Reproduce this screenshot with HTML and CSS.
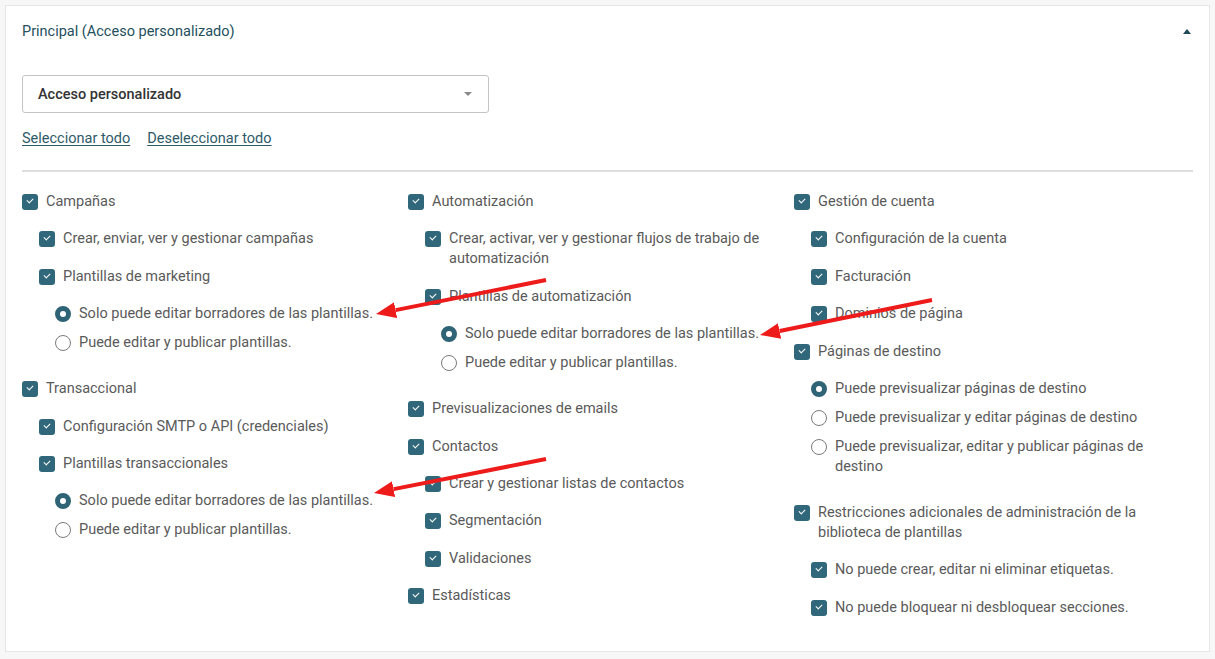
FILE: index.html
```html
<!DOCTYPE html>
<html lang="es">
<head>
  <meta charset="UTF-8">
  <meta name="viewport" content="width=device-width, initial-scale=1.0">
  <title>Permisos de usuario</title>
  <link rel="stylesheet" href="styles.css">
</head>
<body>
  <div class="card">
    <div class="header">
      <span class="title">Principal (Acceso personalizado)</span>
      <span class="caret-up"></span>
    </div>

    <div class="select">
      <span>Acceso personalizado</span>
      <span class="caret-down"></span>
    </div>

    <div class="links">
      <a href="#">Seleccionar todo</a>
      <a href="#">Deseleccionar todo</a>
    </div>

    <hr class="divider">

    <div class="columns">
      <div class="col">
        <div class="opt"><span class="box"></span><span>Campañas</span></div>
        <div class="opt sub"><span class="box"></span><span>Crear, enviar, ver y gestionar campañas</span></div>
        <div class="opt sub"><span class="box"></span><span>Plantillas de marketing</span></div>
        <div class="radios">
          <div class="radio"><span class="dot on"></span><span>Solo puede editar borradores de las plantillas.</span></div>
          <div class="radio"><span class="dot"></span><span>Puede editar y publicar plantillas.</span></div>
        </div>
        <div class="opt"><span class="box"></span><span>Transaccional</span></div>
        <div class="opt sub"><span class="box"></span><span>Configuración SMTP o API (credenciales)</span></div>
        <div class="opt sub"><span class="box"></span><span>Plantillas transaccionales</span></div>
        <div class="radios">
          <div class="radio"><span class="dot on"></span><span>Solo puede editar borradores de las plantillas.</span></div>
          <div class="radio"><span class="dot"></span><span>Puede editar y publicar plantillas.</span></div>
        </div>
      </div>

      <div class="col">
        <div class="opt"><span class="box"></span><span>Automatización</span></div>
        <div class="opt sub"><span class="box"></span><span>Crear, activar, ver y gestionar flujos de trabajo de automatización</span></div>
        <div class="opt sub"><span class="box"></span><span>Plantillas de automatización</span></div>
        <div class="radios">
          <div class="radio"><span class="dot on"></span><span>Solo puede editar borradores de las plantillas.</span></div>
          <div class="radio"><span class="dot"></span><span>Puede editar y publicar plantillas.</span></div>
        </div>
        <div class="opt"><span class="box"></span><span>Previsualizaciones de emails</span></div>
        <div class="opt"><span class="box"></span><span>Contactos</span></div>
        <div class="opt sub"><span class="box"></span><span>Crear y gestionar listas de contactos</span></div>
        <div class="opt sub"><span class="box"></span><span>Segmentación</span></div>
        <div class="opt sub"><span class="box"></span><span>Validaciones</span></div>
        <div class="opt"><span class="box"></span><span>Estadísticas</span></div>
      </div>

      <div class="col">
        <div class="opt"><span class="box"></span><span>Gestión de cuenta</span></div>
        <div class="opt sub"><span class="box"></span><span>Configuración de la cuenta</span></div>
        <div class="opt sub"><span class="box"></span><span>Facturación</span></div>
        <div class="opt sub"><span class="box"></span><span>Dominios de página</span></div>
        <div class="opt"><span class="box"></span><span>Páginas de destino</span></div>
        <div class="radios shallow">
          <div class="radio"><span class="dot on"></span><span>Puede previsualizar páginas de destino</span></div>
          <div class="radio"><span class="dot"></span><span>Puede previsualizar y editar páginas de destino</span></div>
          <div class="radio"><span class="dot"></span><span>Puede previsualizar, editar y publicar páginas de destino</span></div>
        </div>
        <div class="opt"><span class="box"></span><span>Restricciones adicionales de administración de la biblioteca de plantillas</span></div>
        <div class="opt sub"><span class="box"></span><span>No puede crear, editar ni eliminar etiquetas.</span></div>
        <div class="opt sub"><span class="box"></span><span>No puede bloquear ni desbloquear secciones.</span></div>
      </div>
    </div>
  </div>

  <!-- red annotation arrows drawn over the screenshot -->
  <svg class="arrows" width="1215" height="659" viewBox="0 0 1215 659">
    <defs>
      <marker id="head" markerWidth="20" markerHeight="16" refX="0" refY="8" orient="auto" markerUnits="userSpaceOnUse">
        <path d="M0,0 L20,8 L0,16 z" fill="#ee1b1b"/>
      </marker>
    </defs>
    <line x1="546" y1="280" x2="395.6" y2="310.1" marker-end="url(#head)"/>
    <line x1="932" y1="300" x2="779.6" y2="331" marker-end="url(#head)"/>
    <line x1="546" y1="459" x2="393.6" y2="489.1" marker-end="url(#head)"/>
  </svg>
</body>
</html>
```

FILE: styles.css
```css
body {
  font-family: Roboto, "Liberation Sans", Arial, sans-serif;
  font-size: 14.5px;
  background: #f7f7f7;
  margin: 0;
  padding: 5px;
  color: #5a5a5a;
}
.card {
  box-sizing: border-box;
  height: 647px;
  width: 1205px;
  background: white;
  border: 1px solid #e6e6e6;
  padding: 0 16px;
}
.header {
  height: 51px;
  display: flex;
  align-items: center;
  justify-content: space-between;
}
.title {
  color: #24505e;
  line-height: 20px;
}
.caret-up {
  width: 0;
  height: 0;
  margin-right: 2px;
  border-left: 4px solid transparent;
  border-right: 4px solid transparent;
  border-bottom: 5px solid #1f4a58;
}
.select {
  box-sizing: border-box;
  width: 467px;
  height: 38px;
  margin-top: 18px;
  border: 1px solid #c4c4c4;
  border-radius: 3px;
  display: flex;
  align-items: center;
  justify-content: space-between;
  padding: 0 16px 0 15px;
  color: #333;
  font-weight: 500;
}
.caret-down {
  width: 0;
  height: 0;
  border-left: 4px solid transparent;
  border-right: 4px solid transparent;
  border-top: 4px solid #8a8a8a;
}
.links {
  margin-top: 16px;
  line-height: 20px;
  display: flex;
  gap: 17px;
}
.links a {
  color: #2e5a68;
  text-decoration: underline;
  text-underline-offset: 2px;
}
.divider {
  margin: 21px 0 0;
  border: none;
  border-top: 2px solid #dedede;
}
.columns {
  display: grid;
  grid-template-columns: repeat(3, 386px);
  margin-top: 20px;
}
.opt, .radio {
  display: flex;
  align-items: flex-start;
  gap: 8px;
  line-height: 20px;
}
.opt {
  margin-bottom: 17.4px;
}
.opt.sub {
  padding-left: 17px;
}
.box {
  flex: none;
  position: relative;
  width: 16px;
  height: 16px;
  margin-top: 2px;
  border-radius: 3px;
  background: #30677a;
}
.box::after {
  content: "";
  position: absolute;
  left: 5px;
  top: 4px;
  width: 5px;
  height: 3px;
  border-left: 1.6px solid white;
  border-bottom: 1.6px solid white;
  transform: rotate(-45deg);
}
.radios {
  padding-left: 33px;
  margin-bottom: 26px;
}
.radios.shallow {
  padding-left: 17px;
}
.radio + .radio {
  margin-top: 9px;
}
.dot {
  flex: none;
  box-sizing: border-box;
  width: 16px;
  height: 16px;
  margin-top: 2px;
  border-radius: 50%;
  border: 1px solid #7a7a7a;
  background: white;
}
.dot.on {
  border: 5px solid #2e6476;
}
.arrows {
  position: absolute;
  top: 0;
  left: 0;
  pointer-events: none;
}
.arrows line {
  stroke: #ee1b1b;
  stroke-width: 4;
}
```
